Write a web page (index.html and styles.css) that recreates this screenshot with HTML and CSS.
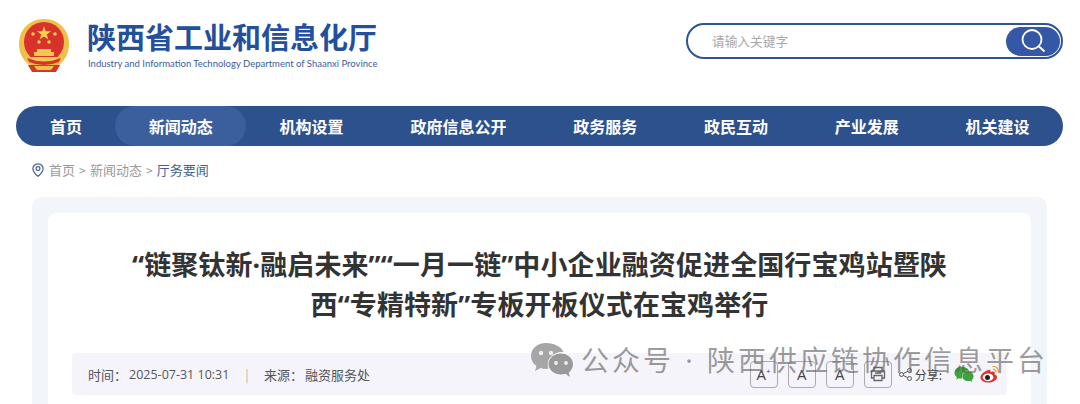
FILE: index.html
```html
<!DOCTYPE html>
<html lang="zh-CN">
<head>
    <meta charset="UTF-8">
    <meta name="viewport" content="width=device-width, initial-scale=1.0">
    <title>陕西省工业和信息化厅</title>
    <link rel="stylesheet" href="styles.css">
</head>
<body>
<div class="page">

    <!-- Header: emblem, department name, search -->
    <header class="header">
        <div class="brand">
            <svg class="emblem" viewBox="0 0 52 56">
                <path d="M26 1C11 1 1 12 1 26c0 9 4 16 10 21h30c6-5 10-12 10-21C51 12 41 1 26 1z" fill="#eec04a"/>
                <circle cx="26" cy="24" r="20" fill="#d8322a"/>
                <path d="M26 8l1.700 5.200h5.400l-4.400 3.200 1.700 5.200-4.400-3.200-4.400 3.200 1.700-5.200-4.400-3.200h5.400z" fill="#f5cf55"/>
                <circle cx="15" cy="16" r="1.700" fill="#f5cf55"/>
                <circle cx="37" cy="16" r="1.700" fill="#f5cf55"/>
                <circle cx="21" cy="24" r="1.700" fill="#f5cf55"/>
                <circle cx="31" cy="24" r="1.700" fill="#f5cf55"/>
                <path d="M19 31h14v3h3v4H16v-4h3z" fill="#f0c850"/>
                <path d="M7 39h38l-3 6H10z" fill="#f0c850"/>
                <path d="M9 40q17 7 34 0l-2 4q-15 6-30 0z" fill="#d8322a"/>
                <path d="M10 47h32l-4 7H14z" fill="#d8322a"/>
                <path d="M16 48h20l-3 4H19z" fill="#eec04a"/>
            </svg>
            <div class="brand-text">
                <div class="brand-name">陕西省工业和信息化厅</div>
                <div class="brand-en">Industry and Information Technology Department of Shaanxi Province</div>
            </div>
        </div>
        <div class="search">
            <span class="search-hint">请输入关键字</span>
            <div class="search-btn">
                <svg viewBox="0 0 28 28" width="28" height="28">
                    <circle cx="13" cy="12.500" r="9.500" fill="none" stroke="#fff" stroke-width="1.800"/>
                    <path d="M20 19.500l5.500 5" stroke="#fff" stroke-width="2" fill="none"/>
                </svg>
            </div>
        </div>
    </header>

    <nav class="nav">
        <a class="nav-item">首页</a>
        <a class="nav-item active">新闻动态</a>
        <a class="nav-item">机构设置</a>
        <a class="nav-item">政府信息公开</a>
        <a class="nav-item">政务服务</a>
        <a class="nav-item">政民互动</a>
        <a class="nav-item">产业发展</a>
        <a class="nav-item">机关建设</a>
    </nav>

    <div class="crumbs">
        <svg class="pin" viewBox="0 0 12 14" width="12" height="14">
            <path d="M6 .8C3 .8.9 3 .9 5.700c0 3 2.700 5.600 5.100 7.600 2.400-2 5.100-4.600 5.100-7.600C11.100 3 9 .8 6 .8z" fill="none" stroke="#3f5f95" stroke-width="1.200"/>
            <circle cx="6" cy="5.600" r="1.900" fill="none" stroke="#3f5f95" stroke-width="1.200"/>
        </svg>
        <span>首页</span><span class="sep">&gt;</span><span>新闻动态</span><span class="sep">&gt;</span><span class="current">厅务要闻</span>
    </div>

    <main class="panel">
        <article class="card">
            <h1 class="title">“链聚钛新·融启未来”“一月一链”中小企业融资促进全国行宝鸡站暨陕西“专精特新”专板开板仪式在宝鸡举行</h1>
            <div class="meta">
                <span class="meta-label">时间：</span><span class="meta-time">2025-07-31 10:31</span>
                <span class="meta-bar">|</span>
                <span class="meta-label">来源：</span><span>融资服务处</span>
                <div class="tools">
                    <span class="tool">A<sup>+</sup></span>
                    <span class="tool">A</span>
                    <span class="tool">A</span>
                    <span class="tool">
                        <svg viewBox="0 0 18 18" width="18" height="18" fill="none" stroke="#666" stroke-width="1.300">
                            <path d="M5 6V2.500h8V6M5 13H2.500V6h13v7H13"/>
                            <path d="M5 10.500h8v5H5zM6 8h6"/>
                        </svg>
                    </span>
                    <svg class="share-icon" viewBox="0 0 13 13" width="13" height="13" fill="none" stroke="#555" stroke-width="1">
                        <circle cx="2.500" cy="6.500" r="2"/>
                        <circle cx="10.500" cy="2.500" r="2"/>
                        <circle cx="10.500" cy="10.500" r="2"/>
                        <path d="M4.300 5.600l4.400-2.200M4.300 7.400l4.400 2.200"/>
                    </svg>
                    <span class="share-label">分享:</span>
                    <svg class="wx-icon" viewBox="0 0 44 36" width="20" height="17">
                        <path d="M16 1C7 1 1 7 1 14c0 4 2 7.500 5.500 10L5 29l5.500-3c2 .6 3.500.9 5.500.9 1 0 1.500 0 2.500-.1-.5-1.300-.8-2.800-.8-4.300 0-7 6.300-12.500 14.300-12.500h1.500C31.500 5 24.500 1 16 1z" fill="#3fa23a"/>
                        <path d="M43 22c0-6-6-10.500-12-10.500-7 0-12.500 4.700-12.500 10.500S24 32.500 31 32.500c1.500 0 3-.3 4.300-.7L40 35l-1.200-4.300C41.300 28.500 43 25.500 43 22z" fill="#3fa23a"/>
                    </svg>
                    <svg class="wb-icon" viewBox="0 0 20 18" width="20" height="18">
                        <path d="M8.500 5C4.500 6 .5 9.500.5 12.500c0 3 3.800 5 8 5 5 0 8.500-2.700 8.500-5.300 0-1.700-1.500-2.400-2.500-2.700.5-1.300.4-2.400-.3-2.800-1-.6-2.800 0-3.800.4.200-1 .1-2-.5-2.300-.4-.1-.9.100-1.400.2z" fill="#d9342b"/>
                        <ellipse cx="8" cy="12.300" rx="5.300" ry="3.900" fill="#fff"/>
                        <circle cx="7.500" cy="12.500" r="2.500" fill="#222"/>
                        <path d="M12.500 1.500c3.500-.5 6.500 2.200 6 6M13 4.200c1.800-.2 3.200 1.200 3 3" fill="none" stroke="#e9a33a" stroke-width="1.300"/>
                    </svg>
                </div>
            </div>
        </article>
    </main>

    <!-- WeChat repost watermark sits over the article -->
    <div class="watermark">
        <svg viewBox="0 0 44 36" width="44" height="36">
            <path d="M16 1C7 1 1 7 1 14c0 4 2 7.500 5.500 10L5 29l5.500-3c2 .6 3.500.9 5.500.9 1 0 1.500 0 2.500-.1-.5-1.300-.8-2.800-.8-4.300 0-7 6.300-12.500 14.300-12.500h1.500C31.500 5 24.500 1 16 1z" fill="#a6a6a6"/>
            <path d="M43 22c0-6-6-10.500-12-10.500-7 0-12.500 4.700-12.500 10.500S24 32.500 31 32.500c1.500 0 3-.3 4.300-.7L40 35l-1.200-4.300C41.300 28.500 43 25.500 43 22z" fill="#9a9a9a"/>
            <circle cx="11" cy="11" r="2.200" fill="#eee"/>
            <circle cx="21" cy="11" r="2.200" fill="#eee"/>
            <circle cx="26" cy="21" r="1.900" fill="#eee"/>
            <circle cx="36" cy="21" r="1.900" fill="#eee"/>
        </svg>
        <span>公众号 · 陕西供应链协作信息平台</span>
    </div>

</div>
</body>
</html>
```

FILE: styles.css
```css
* {
    box-sizing: border-box;
}
html, body {
    margin: 0;
    padding: 0;
    background-color: #fff;
}
body {
    font-family: "Noto Sans CJK SC", "Noto Sans", sans-serif;
}
.page {
    position: relative;
    width: 1080px;
    height: 404px;
    overflow: hidden;
    display: flex;
    flex-direction: column;
}

/* Header */
.header {
    height: 106px;
    display: flex;
    justify-content: space-between;
    padding: 18px 17px 0 18px;
}
.brand {
    display: flex;
    align-items: flex-start;
}
.emblem {
    width: 52px;
    height: 56px;
}
.brand-text {
    margin-left: 17px;
}
.brand-name {
    font-size: 29px;
    line-height: 37px;
    font-weight: 700;
    color: #24509b;
    white-space: nowrap;
}
.brand-en {
    font-family: Lato, sans-serif;
    font-size: 9.500px;
    line-height: 14px;
    margin-top: 2px;
    margin-left: 1px;
    color: #3c5c9c;
    white-space: nowrap;
}
.search {
    width: 377px;
    height: 36px;
    margin-top: 5px;
    border: 2.500px solid #2f5496;
    border-radius: 18px;
    padding: 0 1px 0 24px;
    display: flex;
    align-items: center;
    justify-content: space-between;
}
.search-hint {
    font-size: 12.700px;
    margin-top: -2px;
    color: #a8a8a8;
}
.search-btn {
    width: 54px;
    height: 29px;
    border-radius: 15px;
    background-color: #3558a6;
    display: flex;
    align-items: center;
    justify-content: center;
}

/* Main nav */
.nav {
    height: 40px;
    margin: 0 17px 0 16px;
    padding-left: 0.600px;
    border-radius: 20px;
    background-color: #2d518c;
    display: flex;
    flex-shrink: 0;
}
.nav-item {
    padding: 0 33.400px;
    font-size: 16px;
    line-height: 40px;
    font-weight: 700;
    color: #fff;
    white-space: nowrap;
}
.nav-item.active {
    border-radius: 20px;
    background-color: #3a5f9c;
}

/* Breadcrumb */
.crumbs {
    height: 51px;
    padding: 15px 0 0 32px;
    display: flex;
    align-items: flex-start;
    font-size: 13px;
    line-height: 18px;
    color: #9a9a9a;
    flex-shrink: 0;
}
.pin {
    margin: 2px 5px 0 0;
}
.sep {
    margin: 0 4.100px;
    font-size: 12px;
}
.current {
    color: #3f5f95;
}

/* Article */
.panel {
    flex: 1;
    margin: 0 33px 0 32px;
    padding: 16px 16px 0;
    border-radius: 10px 10px 0 0;
    background-color: #f2f5f9;
}
.card {
    height: 100%;
    padding: 32px 24px 0;
    border-radius: 8px 8px 0 0;
    background-color: #fff;
}
.title {
    width: 830px;
    margin: 0 auto;
    font-family: "Noto Sans", "Noto Sans CJK SC", sans-serif;
    font-size: 27px;
    line-height: 40px;
    letter-spacing: 0.100px;
    font-weight: 700;
    text-align: center;
    color: #333;
}
.meta {
    height: 42px;
    margin-top: 28px;
    padding-left: 16px;
    border-radius: 4px;
    background-color: #f5f4fb;
    display: flex;
    align-items: center;
    font-size: 13px;
    color: #555;
}
.meta-label {
    margin-right: 2px;
}
.meta-time {
    font-family: "Open Sans", sans-serif;
    font-size: 12.500px;
}
.meta-bar {
    margin: 0 15px 0 16px;
    color: #c4b6a8;
}
.tools {
    margin-left: auto;
    margin-right: 7px;
    display: flex;
    align-items: center;
}
.tool {
    width: 28px;
    height: 27px;
    margin-right: 10px;
    border: 1px solid #aaa;
    border-radius: 4px;
    display: flex;
    align-items: center;
    justify-content: center;
    font-family: "Open Sans", sans-serif;
    font-size: 15px;
    color: #444;
}
.tool sup {
    font-size: 8px;
    line-height: 8px;
    margin-bottom: 6px;
}
.tool:nth-child(4) {
    margin-right: 7px;
}
.share-icon {
    margin-right: 3px;
}
.share-label {
    font-size: 12px;
    color: #444;
    margin-right: 12px;
}
.wx-icon {
    margin-right: 6px;
}

/* Watermark */
.watermark {
    position: absolute;
    left: 530px;
    top: 342px;
    display: flex;
    align-items: center;
}
.watermark span {
    margin-left: 7px;
    font-family: "Noto Sans", "Noto Sans CJK SC", sans-serif;
    font-size: 28px;
    line-height: 36px;
    letter-spacing: 3px;
    word-spacing: 1px;
    color: rgba(90, 90, 90, 0.6);
    white-space: nowrap;
}
```
